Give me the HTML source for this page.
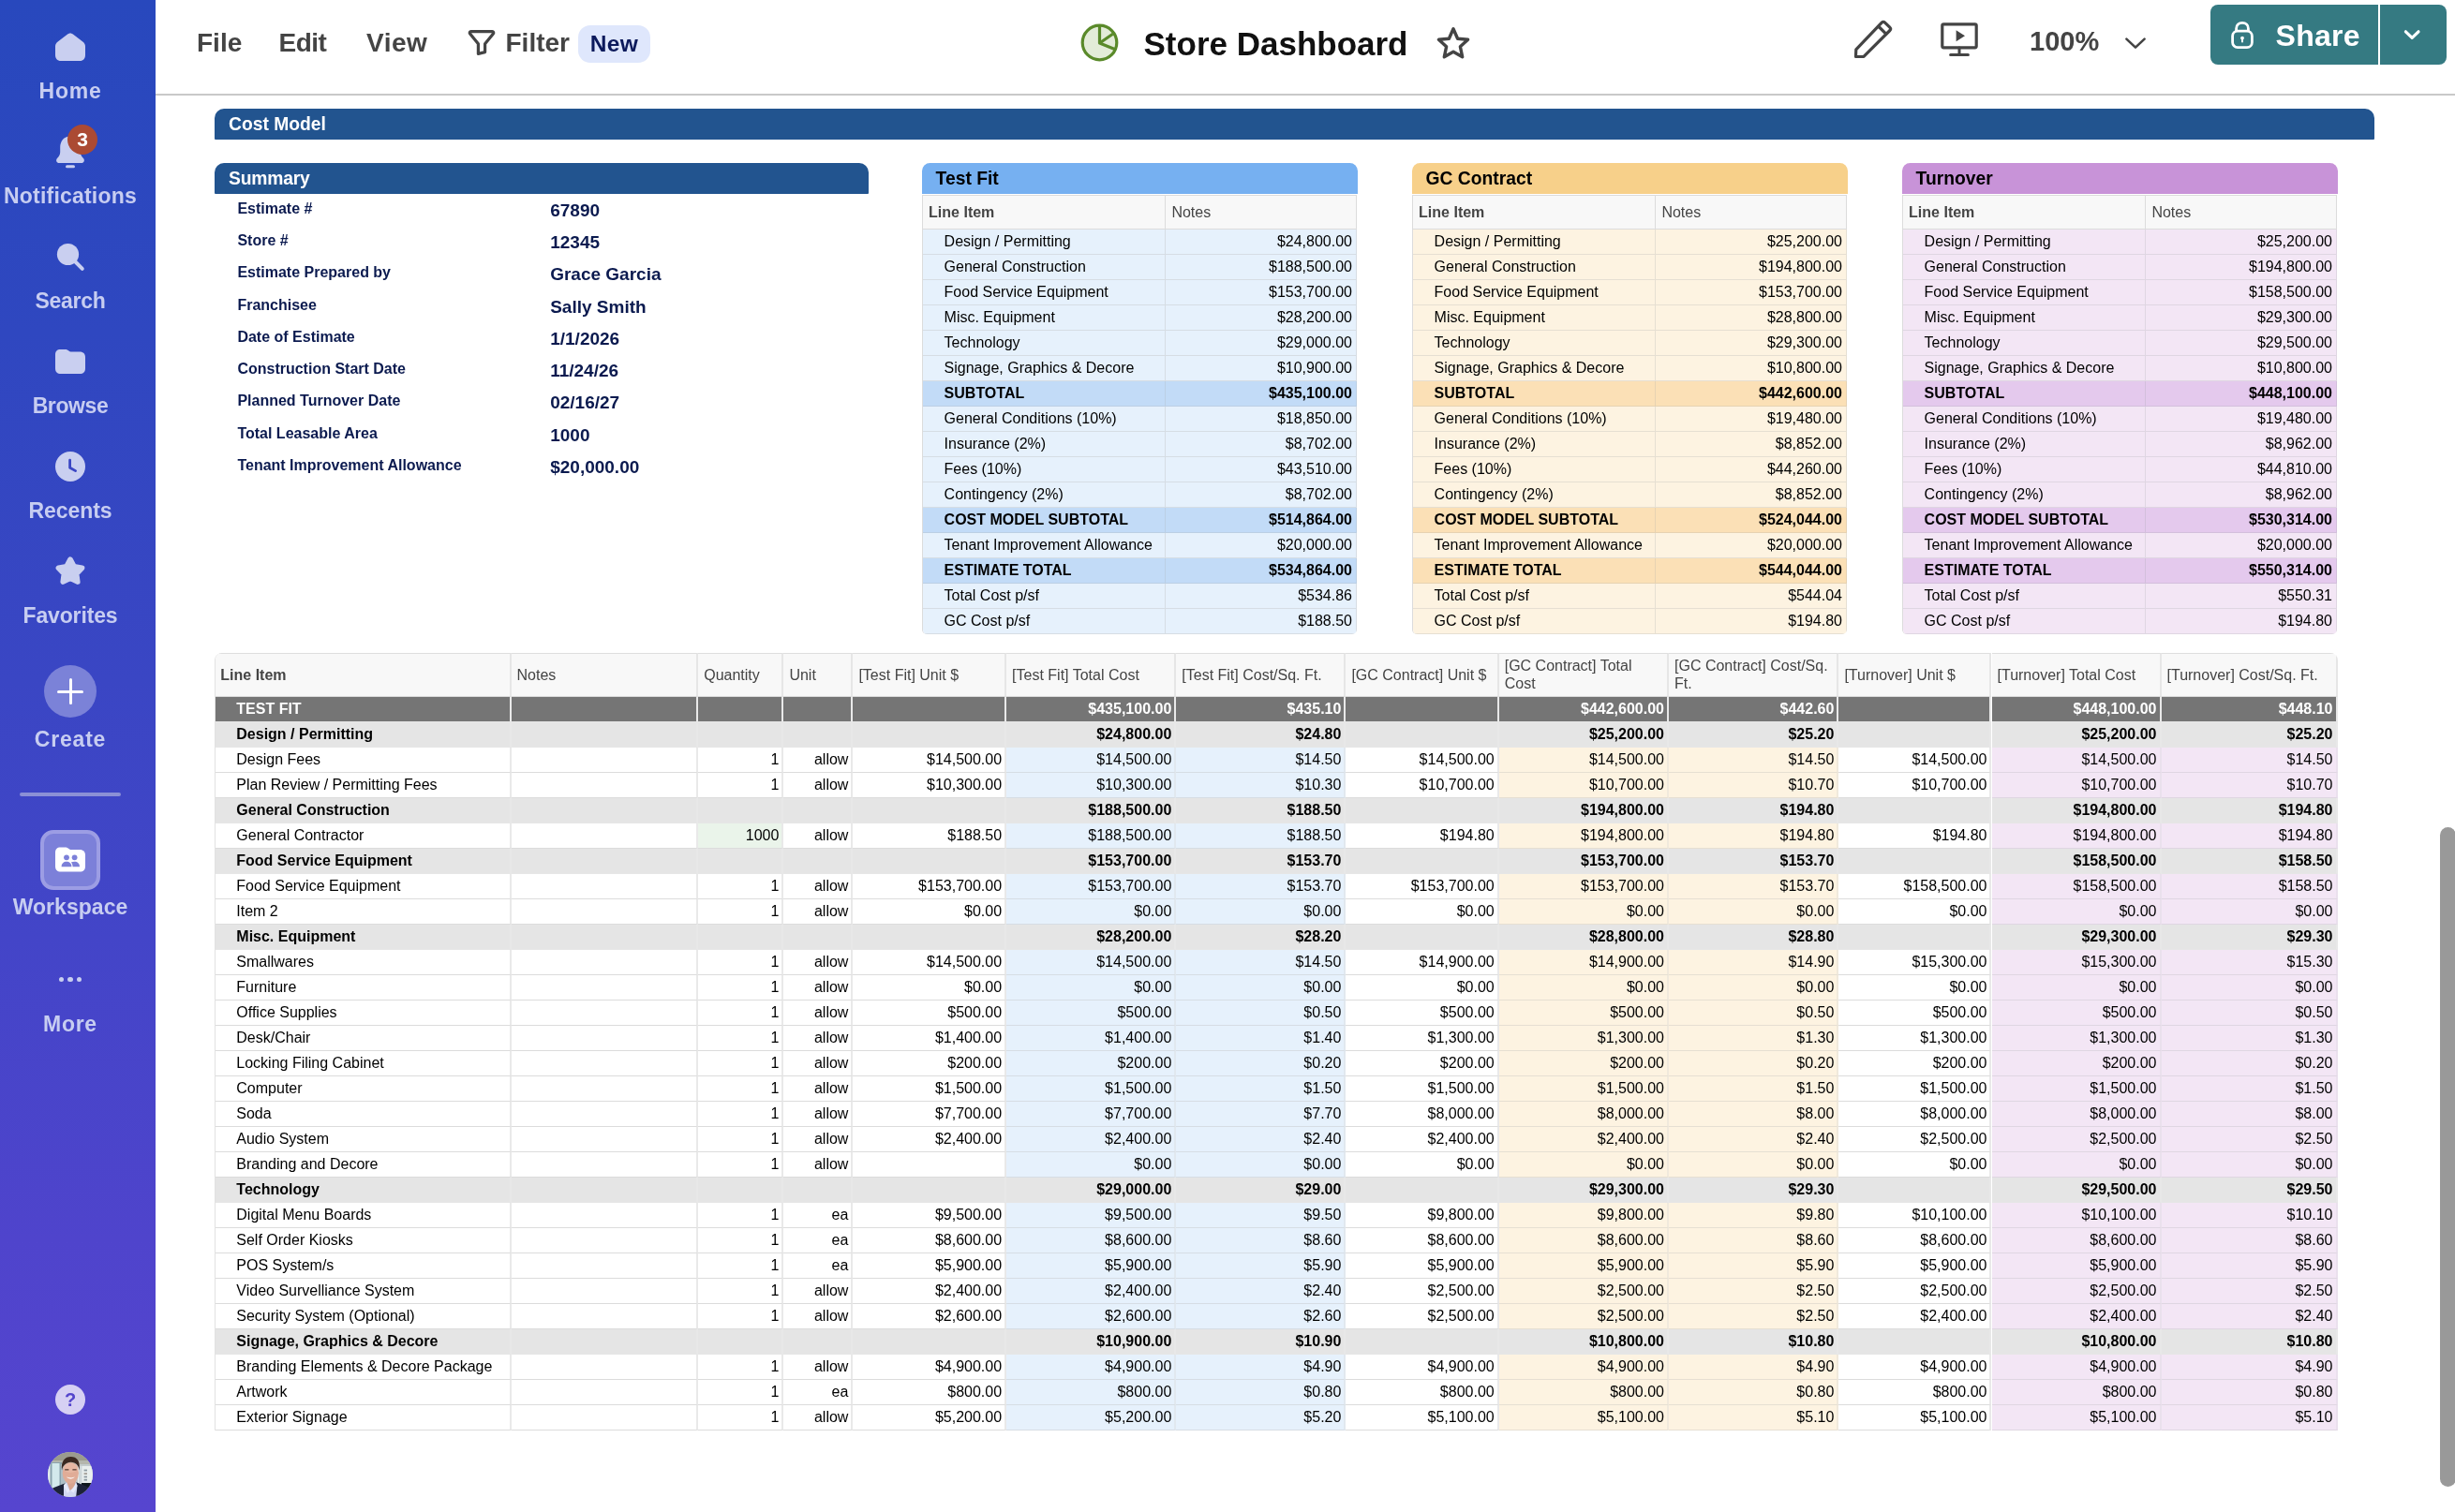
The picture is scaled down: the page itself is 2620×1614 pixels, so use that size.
<!DOCTYPE html>
<html><head><meta charset="utf-8"><title>Store Dashboard</title>
<style>
*{box-sizing:border-box;margin:0;padding:0}
html,body{width:2620px;height:1614px;overflow:hidden;background:#fff}
body{position:relative;font-family:"Liberation Sans",sans-serif;color:#000;-webkit-font-smoothing:antialiased}
#w{position:absolute;left:0;top:0;width:2620px;height:1614px;will-change:transform}
.abs{position:absolute}
/* ---------- sidebar ---------- */
#side{position:absolute;left:0;top:0;width:166px;height:1614px;
  background:linear-gradient(180deg,#2848bd 0%,#2f47c0 22%,#3a46c4 45%,#4345c8 62%,#4f44cc 82%,#5645cf 100%)}
.nl{position:absolute;left:0;width:150px;text-align:center;font-weight:bold;font-size:23px;line-height:28px;color:#c7cdf1;letter-spacing:.35px;white-space:nowrap}
.ni{position:absolute}
/* ---------- header ---------- */
#hdr{position:absolute;left:166px;top:0;width:2454px;height:102px;background:#fff;border-bottom:2px solid #c9c9c9}
.menu{position:absolute;font-weight:bold;font-size:28px;line-height:34px;color:#444;white-space:nowrap}
/* ---------- widgets ---------- */
.bar{position:absolute;height:33.4px;border-radius:10px 10px 1px 1px;font-weight:bold;font-size:19.3px;line-height:34px;padding-left:15px;white-space:nowrap}
.navy{background:#22548f;color:#fff}
.sl{position:absolute;left:253.4px;font-weight:bold;font-size:16px;line-height:20px;color:#0b1a4f;white-space:nowrap}
.sv{position:absolute;left:587.2px;font-weight:bold;font-size:19px;line-height:24px;color:#0b1a4f;white-space:nowrap}
/* ---------- grid tables ---------- */
.tb{position:absolute;font-size:16px;line-height:18px;white-space:nowrap}
.r{position:absolute;left:0;height:27px;width:100%}
.c{position:absolute;top:0;height:27px;border-right:1px solid #dbdbdb;border-bottom:1px solid #dcdcdc;padding:4px 4px 0 6px;overflow:hidden}
.c.n{text-align:right}
.c.i{padding-left:22.3px}
.h .c{background:#f8f8f8;color:#444;border-top:1px solid #dedede;border-bottom:1px solid #dadada;border-right:1px solid #dbdbdb;white-space:normal;display:flex;align-items:center;padding-top:0;line-height:19px}
.b{font-weight:bold}

.card{position:absolute;top:174px;width:464.8px}
.ch{position:absolute;left:0;top:0;width:464.8px;height:33px;border-radius:8.5px 8.5px 0 0;font-weight:bold;font-size:19.3px;line-height:33px;padding-left:14.5px;color:#000}
.tf .ch{background:#76b0f1}.gc .ch{background:#f7d08a}.to .ch{background:#c893d8}
.tf .c{background:#e6f1fc;border-color:#d6dde4}.tf .b .c{background:#c2dbf7;border-color:#bccfe4}
.gc .c{background:#fdf3e1;border-color:#e6dfd2}.gc .b .c{background:#fbe0b6;border-color:#e6d2b2}
.to .c{background:#f3e6f5;border-color:#dfd6e2}.to .b .c{background:#e4c9ed;border-color:#d3bfdc}
.card .h .c{background:#f8f8f8;border-color:#dcdcdc}
.card .c.i{padding-left:22.5px}.card .c.n{padding-right:4px}
.card .tb{left:0;top:34px;width:463.9px;height:469px;border-left:1px solid #dcdcdc;border-radius:0 0 5px 5px;overflow:hidden}
/* big table */
#big{left:229px;top:696.8px;width:2265.5px;height:830px;border-left:1px solid #e2e2e2;border-radius:8px 8px 0 0;overflow:hidden}
#big .c{border-right:2px solid #e9e9e9;padding-right:3px}
#big .h .c{border-right:2px solid #e6e6e6}
#big .h .c:first-child{padding-left:5.3px}
#big .d .c{background:#757575;color:#fff;border-bottom-color:#e5e5e5;border-right-color:#e9e9e9}
#big .s .c{background:#e5e5e5;border-bottom-color:#e6e6e6;border-right-color:#e8e8e8}
#big .c.bl{background:#e6f1fc;border-color:#d6dde4;border-right-color:#e1e8ef}
#big .c.og{background:#fdf3e1;border-color:#e6dfd2;border-right-color:#f0e9dc}
#big .c.pu{background:#f3e6f5;border-color:#dfd6e2;border-right-color:#eae0ed}
#big .c.gn{background:#eaf4ea}
</style></head>
<body>
<div id="w">
<div id="side">
<svg class="ni" style="left:59px;top:35px" width="32" height="30" viewBox="0 0 32 30"><path d="M16 0.4 C17.3 0.4 18.2 1 19.2 1.8 L29.3 9.6 C31 10.9 32 12.3 32 14.6 L32 23.5 C32 27.6 30 30 26 30 L6 30 C2 30 0 27.6 0 23.5 L0 14.6 C0 12.3 1 10.9 2.7 9.6 L12.8 1.8 C13.8 1 14.7 0.4 16 0.4 Z" fill="#c9cff0"/></svg>
<div class="nl" style="top:83px;letter-spacing:0.75px">Home</div>
<svg class="ni" style="left:58px;top:143px" width="36" height="38" viewBox="0 0 36 38"><path d="M17 2.5 C10 2.5 6.2 8 6.2 14.5 L6.2 19.5 C6.2 22.5 4.5 24.2 3 26 C1.2 28.2 2.3 31 5.2 31 L28.8 31 C31.7 31 32.8 28.2 31 26 C29.5 24.2 27.8 22.5 27.8 19.5 L27.8 14.5 C27.8 8 24 2.5 17 2.5 Z" fill="#c9cff0"/><rect x="12" y="33.3" width="10" height="3" rx="1.5" fill="#c9cff0"/></svg>
<div class="abs" style="left:72px;top:133px;width:32px;height:32px;border-radius:16px;background:#ab4a33;color:#fff;font-weight:bold;font-size:21px;line-height:32px;text-align:center">3</div>
<div class="nl" style="top:195px;letter-spacing:0.2px">Notifications</div>
<svg class="ni" style="left:58px;top:258px" width="34" height="34" viewBox="0 0 34 34"><circle cx="14.5" cy="13.5" r="11.6" fill="#c9cff0"/><path d="M22 21 L29.8 28.8" stroke="#c9cff0" stroke-width="4" stroke-linecap="round"/></svg>
<div class="nl" style="top:307px;letter-spacing:-0.3px">Search</div>
<svg class="ni" style="left:59px;top:373px" width="32" height="26" viewBox="0 0 32 26"><path d="M5.5 0 L11 0 C13.5 0 14.5 2.6 17.5 2.6 L26 2.6 C30 2.6 32 4.8 32 8.6 L32 20 C32 24 30 26 26 26 L6 26 C2 26 0 24 0 20 L0 5.8 C0 2 2 0 5.5 0 Z" fill="#c9cff0"/></svg>
<div class="nl" style="top:419px;letter-spacing:-0.4px">Browse</div>
<svg class="ni" style="left:59px;top:482px" width="32" height="32" viewBox="0 0 32 32"><circle cx="16" cy="16" r="16" fill="#c9cff0"/><path d="M15.6 9.2 L15.6 17.2 L21.6 20.6" fill="none" stroke="#3a46c4" stroke-width="2.8" stroke-linecap="round" stroke-linejoin="round"/></svg>
<div class="nl" style="top:531px;letter-spacing:-0.05px">Recents</div>
<svg class="ni" style="left:58px;top:592px" width="34" height="34" viewBox="0 0 34 34"><path d="M17.0 5.2 L21.1 12.8 L29.6 14.3 L23.6 20.5 L24.8 29.1 L17.0 25.3 L9.2 29.1 L10.4 20.5 L4.4 14.3 L12.9 12.8 Z" fill="#c9cff0" stroke="#c9cff0" stroke-width="5.6" stroke-linejoin="round"/></svg>
<div class="nl" style="top:643px;letter-spacing:-0.15px">Favorites</div>
<div class="abs" style="left:47px;top:710px;width:56px;height:56px;border-radius:28px;background:#7b82d8"></div>
<div class="abs" style="left:61px;top:736.5px;width:28px;height:3px;border-radius:1.5px;background:#fff"></div>
<div class="abs" style="left:73.5px;top:724px;width:3px;height:28px;border-radius:1.5px;background:#fff"></div>
<div class="nl" style="top:775px;letter-spacing:0.8px">Create</div>
<div class="abs" style="left:21px;top:845.5px;width:108px;height:4.5px;border-radius:2px;background:#8b90d6"></div>
<div class="abs" style="left:43px;top:886px;width:64px;height:64px;border-radius:14px;background:#7c80d9;border:4px solid #9c9de4"></div>
<svg class="ni" style="left:59px;top:904px" width="32" height="27" viewBox="0 0 32 27"><path d="M5.5 0.5 L11 0.5 C13.5 0.5 14.5 3.1 17.5 3.1 L26 3.1 C30 3.1 32 5.3 32 9.1 L32 20.5 C32 24.5 30 26.5 26 26.5 L6 26.5 C2 26.5 0 24.5 0 20.5 L0 6.3 C0 2.5 2 0.5 5.5 0.5 Z" fill="#fff"/><circle cx="12" cy="11.3" r="2.9" fill="#7c80d9"/><circle cx="20.6" cy="11.3" r="2.9" fill="#7c80d9"/><path d="M6.6 21.2 C6.6 17.8 9 15.8 12 15.8 C15 15.8 17.4 17.8 17.4 21.2 Z" fill="#7c80d9"/><path d="M18.6 21.2 C18.6 19.2 17.8 17.6 16.8 16.6 C17.9 16 19.2 15.8 20.6 15.8 C23.6 15.8 26 17.8 26 21.2 Z" fill="#7c80d9"/></svg>
<div class="nl" style="top:954px;letter-spacing:0.05px">Workspace</div>
<div class="abs" style="left:62.9px;top:1043px;width:5.2px;height:5.2px;border-radius:3px;background:#c9cff0"></div>
<div class="abs" style="left:72.4px;top:1043px;width:5.2px;height:5.2px;border-radius:3px;background:#c9cff0"></div>
<div class="abs" style="left:82.0px;top:1043px;width:5.2px;height:5.2px;border-radius:3px;background:#c9cff0"></div>
<div class="nl" style="top:1079px;letter-spacing:0.7px">More</div>
<div class="abs" style="left:59px;top:1478px;width:32px;height:32px;border-radius:16px;background:#d6d0f3;color:#5445cc;font-weight:bold;font-size:20px;line-height:32px;text-align:center">?</div>
<svg class="ni" style="left:51px;top:1550px" width="48" height="48" viewBox="0 0 48 48"><defs><clipPath id="av"><circle cx="24" cy="24" r="24"/></clipPath><filter id="bl" x="-10%" y="-10%" width="120%" height="120%"><feGaussianBlur stdDeviation="0.55"/></filter></defs><g clip-path="url(#av)"><rect width="48" height="48" fill="#c3cbcc"/><g filter="url(#bl)"><rect x="-2" y="-2" width="52" height="13" fill="#9b9b8e"/><rect x="-2" y="9" width="52" height="4" fill="#b4b6ad"/><rect x="0" y="11" width="15" height="30" fill="#8aa3ae"/><rect x="4.5" y="12" width="8" height="28" fill="#d3e9ec"/><rect x="0" y="12" width="2.5" height="26" fill="#e4eef0"/><rect x="14" y="13" width="6" height="24" fill="#aebfc6"/><rect x="32" y="15" width="18" height="22" fill="#e9efee"/><rect x="33" y="15" width="3.5" height="20" fill="#cfd8da"/><rect x="38.6" y="18.6" width="3.4" height="1.8" fill="#8e9ba2"/><rect x="38.6" y="22.2" width="3.4" height="1.8" fill="#a39f98"/><rect x="38.6" y="25.6" width="3.4" height="1.8" fill="#8e9ba2"/><rect x="38.6" y="28.8" width="3.4" height="1.8" fill="#8e9ba2"/><rect x="36" y="33" width="14" height="9" fill="#10141f"/><path d="M-2 50 L-2 42 C4 39 11 36 18 33.5 L31 32.5 C37 34.5 43 37.5 50 41 L50 50 Z" fill="#1d2338"/><path d="M17 35 L20.5 32 L30 32 L31.5 36 L30 49 L17 49 Z" fill="#d2d9f1"/><path d="M20 31 L30 31 L28 38 L23.5 41 Z" fill="#d9a48f"/><path d="M19 33 L23.5 41.5 L21 44 L17 36 Z" fill="#e6eafa"/><path d="M30.5 33 L24.5 41.5 L27.5 43.5 L31.5 36 Z" fill="#e6eafa"/><ellipse cx="24.3" cy="22.5" rx="8.6" ry="11.2" fill="#e0ac97"/><ellipse cx="24.3" cy="17" rx="7.8" ry="5" fill="#e6b7a3"/><path d="M15 19.5 C13.8 9.5 18.5 5 24.5 5 C31 5 35 9.5 33.6 19.5 C32.6 14 30.5 11.2 24.5 10.8 C19.5 11.2 16.2 14 15 19.5 Z" fill="#3a2921"/><rect x="18.2" y="18.2" width="4.2" height="1.3" fill="#5b4036"/><rect x="26.4" y="18.2" width="4.2" height="1.3" fill="#5b4036"/><path d="M20 26.6 C22 29.4 26.8 29.4 28.8 26.6 C26.5 27.6 22.3 27.6 20 26.6 Z" fill="#f7efec"/></g></g></svg>
</div>
<div id="hdr">
<div class="menu" style="left:44px;top:29px">File</div>
<div class="menu" style="left:131.5px;top:29px;letter-spacing:-.5px">Edit</div>
<div class="menu" style="left:225px;top:29px;letter-spacing:.5px">View</div>
<svg class="abs" style="left:332px;top:30px" width="32" height="32" viewBox="0 0 32 32"><path d="M4.6 3.7 L27.4 3.7 C28.6 3.7 29.2 5 28.4 6 L19.6 16.8 L19.6 25.6 L12.4 27.4 L12.4 16.8 L3.6 6 C2.8 5 3.4 3.7 4.6 3.7 Z" fill="none" stroke="#444" stroke-width="3.2" stroke-linejoin="round"/></svg>
<div class="menu" style="left:373.5px;top:29px">Filter</div>
<div class="abs" style="left:451px;top:27px;width:77px;height:40px;border-radius:13px;background:#dfe7fc;color:#0c1a5c;font-weight:bold;font-size:24.5px;line-height:40px;text-align:center;letter-spacing:.3px">New</div>
<svg class="abs" style="left:986px;top:23.5px" width="43" height="43" viewBox="0 0 43 43"><circle cx="21.5" cy="21.5" r="18.3" fill="#e3ecd8" stroke="#5a8a2a" stroke-width="3.2"/><path d="M21.5 3.5 L21.5 22 L35.6 12.2 M21.5 22 L37.6 28.6" fill="none" stroke="#5a8a2a" stroke-width="3.2" stroke-linejoin="round"/></svg>
<div class="abs" style="left:1054.5px;top:26.4px;font-weight:bold;font-size:35px;line-height:42px;color:#111;white-space:nowrap;letter-spacing:0">Store Dashboard</div>
<svg class="abs" style="left:1365px;top:26px" width="40" height="40" viewBox="0 0 40 40"><path d="M20 4.8 L24.6 15.2 L35.6 16.3 L27.4 23.8 L29.7 34.8 L20 29.2 L10.3 34.8 L12.6 23.8 L4.4 16.3 L15.4 15.2 Z" fill="none" stroke="#444" stroke-width="3.4" stroke-linejoin="round"/></svg>
<svg class="abs" style="left:1810px;top:19px" width="46" height="46" viewBox="0 0 46 46"><path d="M4.5 41.5 L4.8 33.8 L32.2 5.2 C33.2 4.2 34.6 4.2 35.6 5.1 L40.8 10.1 C41.8 11.1 41.8 12.5 40.9 13.5 L13 41.3 Z M28.6 9 L37 17.3" fill="none" stroke="#444" stroke-width="3.2" stroke-linejoin="round" stroke-linecap="round"/></svg>
<svg class="abs" style="left:1903px;top:22px" width="44" height="40" viewBox="0 0 44 40"><rect x="3.8" y="3.8" width="36.4" height="25" rx="1.5" fill="none" stroke="#444" stroke-width="3.2"/><path d="M22 29 L22 36.4 M12.6 36.6 L31.4 36.6" stroke="#444" stroke-width="3" stroke-linecap="round"/><path d="M18.6 10.2 L28 16.2 L18.6 22.2 Z" fill="#444"/></svg>
<div class="menu" style="left:2000px;top:26.5px;font-size:29px">100%</div>
<svg class="abs" style="left:2100px;top:38px" width="26" height="16" viewBox="0 0 26 16"><path d="M3.4 3.6 L13 12.6 L22.6 3.6" fill="none" stroke="#444" stroke-width="2.6" stroke-linecap="round" stroke-linejoin="round"/></svg>
<div class="abs" style="left:2193px;top:5px;width:179px;height:64px;border-radius:8px 0 0 8px;background:#357a82"></div>
<div class="abs" style="left:2374px;top:5px;width:70.5px;height:64px;border-radius:0 8px 8px 0;background:#357a82"></div>
<svg class="abs" style="left:2212px;top:20px" width="30" height="34" viewBox="0 0 30 34"><path d="M8.6 13.5 L8.6 10.4 C8.6 6.6 11.2 4.4 15 4.4 C18.8 4.4 21.4 6.6 21.4 10.4 L21.4 13.5" fill="none" stroke="#fff" stroke-width="2.8"/><rect x="4.6" y="13.2" width="20.8" height="17.4" rx="5.4" fill="none" stroke="#fff" stroke-width="2.8"/><circle cx="15" cy="20.6" r="1.9" fill="#fff"/><rect x="14" y="20.6" width="2" height="5" rx="1" fill="#fff"/></svg>
<div class="abs" style="left:2262.5px;top:8.5px;font-weight:bold;font-size:32px;line-height:58px;color:#fff;white-space:nowrap;letter-spacing:.3px">Share</div>
<svg class="abs" style="left:2396px;top:28px" width="24" height="18" viewBox="0 0 24 18"><path d="M5.4 5.8 L12.2 12.4 L19 5.8" fill="none" stroke="#fff" stroke-width="3.2" stroke-linecap="round" stroke-linejoin="round"/></svg>
</div>
<div class="bar navy" style="left:229px;top:116px;width:2305px">Cost Model</div>
<div class="bar navy" style="left:229px;top:174px;width:698px;letter-spacing:-.2px">Summary</div>
<div class="sl" style="top:212.90px">Estimate #</div>
<div class="sv" style="top:212.83px">67890</div>
<div class="sl" style="top:247.16px">Store #</div>
<div class="sv" style="top:247.09px">12345</div>
<div class="sl" style="top:281.42px">Estimate Prepared by</div>
<div class="sv" style="top:281.35px">Grace Garcia</div>
<div class="sl" style="top:315.68px">Franchisee</div>
<div class="sv" style="top:315.61px">Sally Smith</div>
<div class="sl" style="top:349.94px">Date of Estimate</div>
<div class="sv" style="top:349.87px">1/1/2026</div>
<div class="sl" style="top:384.20px">Construction Start Date</div>
<div class="sv" style="top:384.13px">11/24/26</div>
<div class="sl" style="top:418.46px">Planned Turnover Date</div>
<div class="sv" style="top:418.39px">02/16/27</div>
<div class="sl" style="top:452.72px">Total Leasable Area</div>
<div class="sv" style="top:452.65px">1000</div>
<div class="sl" style="top:486.98px">Tenant Improvement Allowance</div>
<div class="sv" style="top:486.91px">$20,000.00</div>
<div class="abs" style="left:2604px;top:883px;width:17px;height:704px;border-radius:8.5px;background:#999"></div>
<div class="card tf" style="left:984.1px">
<div class="ch">Test Fit</div>
<div class="tb">
<div class="r h" style="top:0;height:37px"><div class="c b" style="left:0;width:259.3px;height:37px">Line Item</div><div class="c" style="left:259.3px;width:203.6px;height:37px">Notes</div></div>
<div class="r" style="top:37px"><div class="c i" style="left:0;width:259.3px">Design / Permitting</div><div class="c n" style="left:259.3px;width:203.6px">$24,800.00</div></div>
<div class="r" style="top:64px"><div class="c i" style="left:0;width:259.3px">General Construction</div><div class="c n" style="left:259.3px;width:203.6px">$188,500.00</div></div>
<div class="r" style="top:91px"><div class="c i" style="left:0;width:259.3px">Food Service Equipment</div><div class="c n" style="left:259.3px;width:203.6px">$153,700.00</div></div>
<div class="r" style="top:118px"><div class="c i" style="left:0;width:259.3px">Misc. Equipment</div><div class="c n" style="left:259.3px;width:203.6px">$28,200.00</div></div>
<div class="r" style="top:145px"><div class="c i" style="left:0;width:259.3px">Technology</div><div class="c n" style="left:259.3px;width:203.6px">$29,000.00</div></div>
<div class="r" style="top:172px"><div class="c i" style="left:0;width:259.3px">Signage, Graphics &amp; Decore</div><div class="c n" style="left:259.3px;width:203.6px">$10,900.00</div></div>
<div class="r b" style="top:199px"><div class="c i" style="left:0;width:259.3px">SUBTOTAL</div><div class="c n" style="left:259.3px;width:203.6px">$435,100.00</div></div>
<div class="r" style="top:226px"><div class="c i" style="left:0;width:259.3px">General Conditions (10%)</div><div class="c n" style="left:259.3px;width:203.6px">$18,850.00</div></div>
<div class="r" style="top:253px"><div class="c i" style="left:0;width:259.3px">Insurance (2%)</div><div class="c n" style="left:259.3px;width:203.6px">$8,702.00</div></div>
<div class="r" style="top:280px"><div class="c i" style="left:0;width:259.3px">Fees (10%)</div><div class="c n" style="left:259.3px;width:203.6px">$43,510.00</div></div>
<div class="r" style="top:307px"><div class="c i" style="left:0;width:259.3px">Contingency (2%)</div><div class="c n" style="left:259.3px;width:203.6px">$8,702.00</div></div>
<div class="r b" style="top:334px"><div class="c i" style="left:0;width:259.3px">COST MODEL SUBTOTAL</div><div class="c n" style="left:259.3px;width:203.6px">$514,864.00</div></div>
<div class="r" style="top:361px"><div class="c i" style="left:0;width:259.3px">Tenant Improvement Allowance</div><div class="c n" style="left:259.3px;width:203.6px">$20,000.00</div></div>
<div class="r b" style="top:388px"><div class="c i" style="left:0;width:259.3px">ESTIMATE TOTAL</div><div class="c n" style="left:259.3px;width:203.6px">$534,864.00</div></div>
<div class="r" style="top:415px"><div class="c i" style="left:0;width:259.3px">Total Cost p/sf</div><div class="c n" style="left:259.3px;width:203.6px">$534.86</div></div>
<div class="r" style="top:442px"><div class="c i" style="left:0;width:259.3px">GC Cost p/sf</div><div class="c n" style="left:259.3px;width:203.6px">$188.50</div></div>
</div></div>
<div class="card gc" style="left:1507.1px">
<div class="ch">GC Contract</div>
<div class="tb">
<div class="r h" style="top:0;height:37px"><div class="c b" style="left:0;width:259.3px;height:37px">Line Item</div><div class="c" style="left:259.3px;width:203.6px;height:37px">Notes</div></div>
<div class="r" style="top:37px"><div class="c i" style="left:0;width:259.3px">Design / Permitting</div><div class="c n" style="left:259.3px;width:203.6px">$25,200.00</div></div>
<div class="r" style="top:64px"><div class="c i" style="left:0;width:259.3px">General Construction</div><div class="c n" style="left:259.3px;width:203.6px">$194,800.00</div></div>
<div class="r" style="top:91px"><div class="c i" style="left:0;width:259.3px">Food Service Equipment</div><div class="c n" style="left:259.3px;width:203.6px">$153,700.00</div></div>
<div class="r" style="top:118px"><div class="c i" style="left:0;width:259.3px">Misc. Equipment</div><div class="c n" style="left:259.3px;width:203.6px">$28,800.00</div></div>
<div class="r" style="top:145px"><div class="c i" style="left:0;width:259.3px">Technology</div><div class="c n" style="left:259.3px;width:203.6px">$29,300.00</div></div>
<div class="r" style="top:172px"><div class="c i" style="left:0;width:259.3px">Signage, Graphics &amp; Decore</div><div class="c n" style="left:259.3px;width:203.6px">$10,800.00</div></div>
<div class="r b" style="top:199px"><div class="c i" style="left:0;width:259.3px">SUBTOTAL</div><div class="c n" style="left:259.3px;width:203.6px">$442,600.00</div></div>
<div class="r" style="top:226px"><div class="c i" style="left:0;width:259.3px">General Conditions (10%)</div><div class="c n" style="left:259.3px;width:203.6px">$19,480.00</div></div>
<div class="r" style="top:253px"><div class="c i" style="left:0;width:259.3px">Insurance (2%)</div><div class="c n" style="left:259.3px;width:203.6px">$8,852.00</div></div>
<div class="r" style="top:280px"><div class="c i" style="left:0;width:259.3px">Fees (10%)</div><div class="c n" style="left:259.3px;width:203.6px">$44,260.00</div></div>
<div class="r" style="top:307px"><div class="c i" style="left:0;width:259.3px">Contingency (2%)</div><div class="c n" style="left:259.3px;width:203.6px">$8,852.00</div></div>
<div class="r b" style="top:334px"><div class="c i" style="left:0;width:259.3px">COST MODEL SUBTOTAL</div><div class="c n" style="left:259.3px;width:203.6px">$524,044.00</div></div>
<div class="r" style="top:361px"><div class="c i" style="left:0;width:259.3px">Tenant Improvement Allowance</div><div class="c n" style="left:259.3px;width:203.6px">$20,000.00</div></div>
<div class="r b" style="top:388px"><div class="c i" style="left:0;width:259.3px">ESTIMATE TOTAL</div><div class="c n" style="left:259.3px;width:203.6px">$544,044.00</div></div>
<div class="r" style="top:415px"><div class="c i" style="left:0;width:259.3px">Total Cost p/sf</div><div class="c n" style="left:259.3px;width:203.6px">$544.04</div></div>
<div class="r" style="top:442px"><div class="c i" style="left:0;width:259.3px">GC Cost p/sf</div><div class="c n" style="left:259.3px;width:203.6px">$194.80</div></div>
</div></div>
<div class="card to" style="left:2030.1px">
<div class="ch">Turnover</div>
<div class="tb">
<div class="r h" style="top:0;height:37px"><div class="c b" style="left:0;width:259.3px;height:37px">Line Item</div><div class="c" style="left:259.3px;width:203.6px;height:37px">Notes</div></div>
<div class="r" style="top:37px"><div class="c i" style="left:0;width:259.3px">Design / Permitting</div><div class="c n" style="left:259.3px;width:203.6px">$25,200.00</div></div>
<div class="r" style="top:64px"><div class="c i" style="left:0;width:259.3px">General Construction</div><div class="c n" style="left:259.3px;width:203.6px">$194,800.00</div></div>
<div class="r" style="top:91px"><div class="c i" style="left:0;width:259.3px">Food Service Equipment</div><div class="c n" style="left:259.3px;width:203.6px">$158,500.00</div></div>
<div class="r" style="top:118px"><div class="c i" style="left:0;width:259.3px">Misc. Equipment</div><div class="c n" style="left:259.3px;width:203.6px">$29,300.00</div></div>
<div class="r" style="top:145px"><div class="c i" style="left:0;width:259.3px">Technology</div><div class="c n" style="left:259.3px;width:203.6px">$29,500.00</div></div>
<div class="r" style="top:172px"><div class="c i" style="left:0;width:259.3px">Signage, Graphics &amp; Decore</div><div class="c n" style="left:259.3px;width:203.6px">$10,800.00</div></div>
<div class="r b" style="top:199px"><div class="c i" style="left:0;width:259.3px">SUBTOTAL</div><div class="c n" style="left:259.3px;width:203.6px">$448,100.00</div></div>
<div class="r" style="top:226px"><div class="c i" style="left:0;width:259.3px">General Conditions (10%)</div><div class="c n" style="left:259.3px;width:203.6px">$19,480.00</div></div>
<div class="r" style="top:253px"><div class="c i" style="left:0;width:259.3px">Insurance (2%)</div><div class="c n" style="left:259.3px;width:203.6px">$8,962.00</div></div>
<div class="r" style="top:280px"><div class="c i" style="left:0;width:259.3px">Fees (10%)</div><div class="c n" style="left:259.3px;width:203.6px">$44,810.00</div></div>
<div class="r" style="top:307px"><div class="c i" style="left:0;width:259.3px">Contingency (2%)</div><div class="c n" style="left:259.3px;width:203.6px">$8,962.00</div></div>
<div class="r b" style="top:334px"><div class="c i" style="left:0;width:259.3px">COST MODEL SUBTOTAL</div><div class="c n" style="left:259.3px;width:203.6px">$530,314.00</div></div>
<div class="r" style="top:361px"><div class="c i" style="left:0;width:259.3px">Tenant Improvement Allowance</div><div class="c n" style="left:259.3px;width:203.6px">$20,000.00</div></div>
<div class="r b" style="top:388px"><div class="c i" style="left:0;width:259.3px">ESTIMATE TOTAL</div><div class="c n" style="left:259.3px;width:203.6px">$550,314.00</div></div>
<div class="r" style="top:415px"><div class="c i" style="left:0;width:259.3px">Total Cost p/sf</div><div class="c n" style="left:259.3px;width:203.6px">$550.31</div></div>
<div class="r" style="top:442px"><div class="c i" style="left:0;width:259.3px">GC Cost p/sf</div><div class="c n" style="left:259.3px;width:203.6px">$194.80</div></div>
</div></div>
<div class="tb" id="big">
<div class="r h" style="top:0;height:47px">
<div class="c b" style="left:0px;width:315.5px;height:47px">Line Item</div>
<div class="c" style="left:315.5px;width:199.7px;height:47px">Notes</div>
<div class="c" style="left:515.2px;width:91.2px;height:47px">Quantity</div>
<div class="c" style="left:606.4px;width:74px;height:47px">Unit</div>
<div class="c" style="left:680.4px;width:163.7px;height:47px">[Test Fit] Unit $</div>
<div class="c" style="left:844.1px;width:181.2px;height:47px">[Test Fit] Total Cost</div>
<div class="c" style="left:1025.3px;width:181.1px;height:47px">[Test Fit] Cost/Sq. Ft.</div>
<div class="c" style="left:1206.4px;width:163.3px;height:47px">[GC Contract] Unit $</div>
<div class="c" style="left:1369.7px;width:181.3px;height:47px">[GC Contract] Total Cost</div>
<div class="c" style="left:1551px;width:181.4px;height:47px">[GC Contract] Cost/Sq. Ft.</div>
<div class="c" style="left:1732.4px;width:163.1px;height:47px">[Turnover] Unit $</div>
<div class="c" style="left:1895.5px;width:181px;height:47px">[Turnover] Total Cost</div>
<div class="c" style="left:2076.5px;width:188px;height:47px">[Turnover] Cost/Sq. Ft.</div>
</div>
<div class="r d b" style="top:47px">
<div class="c i" style="left:0px;width:315.5px">TEST FIT</div>
<div class="c" style="left:315.5px;width:199.7px"></div>
<div class="c n" style="left:515.2px;width:91.2px"></div>
<div class="c n" style="left:606.4px;width:74px"></div>
<div class="c n" style="left:680.4px;width:163.7px"></div>
<div class="c n" style="left:844.1px;width:181.2px">$435,100.00</div>
<div class="c n" style="left:1025.3px;width:181.1px">$435.10</div>
<div class="c n" style="left:1206.4px;width:163.3px"></div>
<div class="c n" style="left:1369.7px;width:181.3px">$442,600.00</div>
<div class="c n" style="left:1551px;width:181.4px">$442.60</div>
<div class="c n" style="left:1732.4px;width:163.1px"></div>
<div class="c n" style="left:1895.5px;width:181px">$448,100.00</div>
<div class="c n" style="left:2076.5px;width:188px">$448.10</div>
</div>
<div class="r s b" style="top:74px">
<div class="c i" style="left:0px;width:315.5px">Design / Permitting</div>
<div class="c" style="left:315.5px;width:199.7px"></div>
<div class="c n" style="left:515.2px;width:91.2px"></div>
<div class="c n" style="left:606.4px;width:74px"></div>
<div class="c n" style="left:680.4px;width:163.7px"></div>
<div class="c n" style="left:844.1px;width:181.2px">$24,800.00</div>
<div class="c n" style="left:1025.3px;width:181.1px">$24.80</div>
<div class="c n" style="left:1206.4px;width:163.3px"></div>
<div class="c n" style="left:1369.7px;width:181.3px">$25,200.00</div>
<div class="c n" style="left:1551px;width:181.4px">$25.20</div>
<div class="c n" style="left:1732.4px;width:163.1px"></div>
<div class="c n" style="left:1895.5px;width:181px">$25,200.00</div>
<div class="c n" style="left:2076.5px;width:188px">$25.20</div>
</div>
<div class="r" style="top:101px">
<div class="c i" style="left:0px;width:315.5px">Design Fees</div>
<div class="c" style="left:315.5px;width:199.7px"></div>
<div class="c n" style="left:515.2px;width:91.2px">1</div>
<div class="c n" style="left:606.4px;width:74px">allow</div>
<div class="c n" style="left:680.4px;width:163.7px">$14,500.00</div>
<div class="c n bl" style="left:844.1px;width:181.2px">$14,500.00</div>
<div class="c n bl" style="left:1025.3px;width:181.1px">$14.50</div>
<div class="c n" style="left:1206.4px;width:163.3px">$14,500.00</div>
<div class="c n og" style="left:1369.7px;width:181.3px">$14,500.00</div>
<div class="c n og" style="left:1551px;width:181.4px">$14.50</div>
<div class="c n" style="left:1732.4px;width:163.1px">$14,500.00</div>
<div class="c n pu" style="left:1895.5px;width:181px">$14,500.00</div>
<div class="c n pu" style="left:2076.5px;width:188px">$14.50</div>
</div>
<div class="r" style="top:128px">
<div class="c i" style="left:0px;width:315.5px">Plan Review / Permitting Fees</div>
<div class="c" style="left:315.5px;width:199.7px"></div>
<div class="c n" style="left:515.2px;width:91.2px">1</div>
<div class="c n" style="left:606.4px;width:74px">allow</div>
<div class="c n" style="left:680.4px;width:163.7px">$10,300.00</div>
<div class="c n bl" style="left:844.1px;width:181.2px">$10,300.00</div>
<div class="c n bl" style="left:1025.3px;width:181.1px">$10.30</div>
<div class="c n" style="left:1206.4px;width:163.3px">$10,700.00</div>
<div class="c n og" style="left:1369.7px;width:181.3px">$10,700.00</div>
<div class="c n og" style="left:1551px;width:181.4px">$10.70</div>
<div class="c n" style="left:1732.4px;width:163.1px">$10,700.00</div>
<div class="c n pu" style="left:1895.5px;width:181px">$10,700.00</div>
<div class="c n pu" style="left:2076.5px;width:188px">$10.70</div>
</div>
<div class="r s b" style="top:155px">
<div class="c i" style="left:0px;width:315.5px">General Construction</div>
<div class="c" style="left:315.5px;width:199.7px"></div>
<div class="c n" style="left:515.2px;width:91.2px"></div>
<div class="c n" style="left:606.4px;width:74px"></div>
<div class="c n" style="left:680.4px;width:163.7px"></div>
<div class="c n" style="left:844.1px;width:181.2px">$188,500.00</div>
<div class="c n" style="left:1025.3px;width:181.1px">$188.50</div>
<div class="c n" style="left:1206.4px;width:163.3px"></div>
<div class="c n" style="left:1369.7px;width:181.3px">$194,800.00</div>
<div class="c n" style="left:1551px;width:181.4px">$194.80</div>
<div class="c n" style="left:1732.4px;width:163.1px"></div>
<div class="c n" style="left:1895.5px;width:181px">$194,800.00</div>
<div class="c n" style="left:2076.5px;width:188px">$194.80</div>
</div>
<div class="r" style="top:182px">
<div class="c i" style="left:0px;width:315.5px">General Contractor</div>
<div class="c" style="left:315.5px;width:199.7px"></div>
<div class="c n gn" style="left:515.2px;width:91.2px">1000</div>
<div class="c n" style="left:606.4px;width:74px">allow</div>
<div class="c n" style="left:680.4px;width:163.7px">$188.50</div>
<div class="c n bl" style="left:844.1px;width:181.2px">$188,500.00</div>
<div class="c n bl" style="left:1025.3px;width:181.1px">$188.50</div>
<div class="c n" style="left:1206.4px;width:163.3px">$194.80</div>
<div class="c n og" style="left:1369.7px;width:181.3px">$194,800.00</div>
<div class="c n og" style="left:1551px;width:181.4px">$194.80</div>
<div class="c n" style="left:1732.4px;width:163.1px">$194.80</div>
<div class="c n pu" style="left:1895.5px;width:181px">$194,800.00</div>
<div class="c n pu" style="left:2076.5px;width:188px">$194.80</div>
</div>
<div class="r s b" style="top:209px">
<div class="c i" style="left:0px;width:315.5px">Food Service Equipment</div>
<div class="c" style="left:315.5px;width:199.7px"></div>
<div class="c n" style="left:515.2px;width:91.2px"></div>
<div class="c n" style="left:606.4px;width:74px"></div>
<div class="c n" style="left:680.4px;width:163.7px"></div>
<div class="c n" style="left:844.1px;width:181.2px">$153,700.00</div>
<div class="c n" style="left:1025.3px;width:181.1px">$153.70</div>
<div class="c n" style="left:1206.4px;width:163.3px"></div>
<div class="c n" style="left:1369.7px;width:181.3px">$153,700.00</div>
<div class="c n" style="left:1551px;width:181.4px">$153.70</div>
<div class="c n" style="left:1732.4px;width:163.1px"></div>
<div class="c n" style="left:1895.5px;width:181px">$158,500.00</div>
<div class="c n" style="left:2076.5px;width:188px">$158.50</div>
</div>
<div class="r" style="top:236px">
<div class="c i" style="left:0px;width:315.5px">Food Service Equipment</div>
<div class="c" style="left:315.5px;width:199.7px"></div>
<div class="c n" style="left:515.2px;width:91.2px">1</div>
<div class="c n" style="left:606.4px;width:74px">allow</div>
<div class="c n" style="left:680.4px;width:163.7px">$153,700.00</div>
<div class="c n bl" style="left:844.1px;width:181.2px">$153,700.00</div>
<div class="c n bl" style="left:1025.3px;width:181.1px">$153.70</div>
<div class="c n" style="left:1206.4px;width:163.3px">$153,700.00</div>
<div class="c n og" style="left:1369.7px;width:181.3px">$153,700.00</div>
<div class="c n og" style="left:1551px;width:181.4px">$153.70</div>
<div class="c n" style="left:1732.4px;width:163.1px">$158,500.00</div>
<div class="c n pu" style="left:1895.5px;width:181px">$158,500.00</div>
<div class="c n pu" style="left:2076.5px;width:188px">$158.50</div>
</div>
<div class="r" style="top:263px">
<div class="c i" style="left:0px;width:315.5px">Item 2</div>
<div class="c" style="left:315.5px;width:199.7px"></div>
<div class="c n" style="left:515.2px;width:91.2px">1</div>
<div class="c n" style="left:606.4px;width:74px">allow</div>
<div class="c n" style="left:680.4px;width:163.7px">$0.00</div>
<div class="c n bl" style="left:844.1px;width:181.2px">$0.00</div>
<div class="c n bl" style="left:1025.3px;width:181.1px">$0.00</div>
<div class="c n" style="left:1206.4px;width:163.3px">$0.00</div>
<div class="c n og" style="left:1369.7px;width:181.3px">$0.00</div>
<div class="c n og" style="left:1551px;width:181.4px">$0.00</div>
<div class="c n" style="left:1732.4px;width:163.1px">$0.00</div>
<div class="c n pu" style="left:1895.5px;width:181px">$0.00</div>
<div class="c n pu" style="left:2076.5px;width:188px">$0.00</div>
</div>
<div class="r s b" style="top:290px">
<div class="c i" style="left:0px;width:315.5px">Misc. Equipment</div>
<div class="c" style="left:315.5px;width:199.7px"></div>
<div class="c n" style="left:515.2px;width:91.2px"></div>
<div class="c n" style="left:606.4px;width:74px"></div>
<div class="c n" style="left:680.4px;width:163.7px"></div>
<div class="c n" style="left:844.1px;width:181.2px">$28,200.00</div>
<div class="c n" style="left:1025.3px;width:181.1px">$28.20</div>
<div class="c n" style="left:1206.4px;width:163.3px"></div>
<div class="c n" style="left:1369.7px;width:181.3px">$28,800.00</div>
<div class="c n" style="left:1551px;width:181.4px">$28.80</div>
<div class="c n" style="left:1732.4px;width:163.1px"></div>
<div class="c n" style="left:1895.5px;width:181px">$29,300.00</div>
<div class="c n" style="left:2076.5px;width:188px">$29.30</div>
</div>
<div class="r" style="top:317px">
<div class="c i" style="left:0px;width:315.5px">Smallwares</div>
<div class="c" style="left:315.5px;width:199.7px"></div>
<div class="c n" style="left:515.2px;width:91.2px">1</div>
<div class="c n" style="left:606.4px;width:74px">allow</div>
<div class="c n" style="left:680.4px;width:163.7px">$14,500.00</div>
<div class="c n bl" style="left:844.1px;width:181.2px">$14,500.00</div>
<div class="c n bl" style="left:1025.3px;width:181.1px">$14.50</div>
<div class="c n" style="left:1206.4px;width:163.3px">$14,900.00</div>
<div class="c n og" style="left:1369.7px;width:181.3px">$14,900.00</div>
<div class="c n og" style="left:1551px;width:181.4px">$14.90</div>
<div class="c n" style="left:1732.4px;width:163.1px">$15,300.00</div>
<div class="c n pu" style="left:1895.5px;width:181px">$15,300.00</div>
<div class="c n pu" style="left:2076.5px;width:188px">$15.30</div>
</div>
<div class="r" style="top:344px">
<div class="c i" style="left:0px;width:315.5px">Furniture</div>
<div class="c" style="left:315.5px;width:199.7px"></div>
<div class="c n" style="left:515.2px;width:91.2px">1</div>
<div class="c n" style="left:606.4px;width:74px">allow</div>
<div class="c n" style="left:680.4px;width:163.7px">$0.00</div>
<div class="c n bl" style="left:844.1px;width:181.2px">$0.00</div>
<div class="c n bl" style="left:1025.3px;width:181.1px">$0.00</div>
<div class="c n" style="left:1206.4px;width:163.3px">$0.00</div>
<div class="c n og" style="left:1369.7px;width:181.3px">$0.00</div>
<div class="c n og" style="left:1551px;width:181.4px">$0.00</div>
<div class="c n" style="left:1732.4px;width:163.1px">$0.00</div>
<div class="c n pu" style="left:1895.5px;width:181px">$0.00</div>
<div class="c n pu" style="left:2076.5px;width:188px">$0.00</div>
</div>
<div class="r" style="top:371px">
<div class="c i" style="left:0px;width:315.5px">Office Supplies</div>
<div class="c" style="left:315.5px;width:199.7px"></div>
<div class="c n" style="left:515.2px;width:91.2px">1</div>
<div class="c n" style="left:606.4px;width:74px">allow</div>
<div class="c n" style="left:680.4px;width:163.7px">$500.00</div>
<div class="c n bl" style="left:844.1px;width:181.2px">$500.00</div>
<div class="c n bl" style="left:1025.3px;width:181.1px">$0.50</div>
<div class="c n" style="left:1206.4px;width:163.3px">$500.00</div>
<div class="c n og" style="left:1369.7px;width:181.3px">$500.00</div>
<div class="c n og" style="left:1551px;width:181.4px">$0.50</div>
<div class="c n" style="left:1732.4px;width:163.1px">$500.00</div>
<div class="c n pu" style="left:1895.5px;width:181px">$500.00</div>
<div class="c n pu" style="left:2076.5px;width:188px">$0.50</div>
</div>
<div class="r" style="top:398px">
<div class="c i" style="left:0px;width:315.5px">Desk/Chair</div>
<div class="c" style="left:315.5px;width:199.7px"></div>
<div class="c n" style="left:515.2px;width:91.2px">1</div>
<div class="c n" style="left:606.4px;width:74px">allow</div>
<div class="c n" style="left:680.4px;width:163.7px">$1,400.00</div>
<div class="c n bl" style="left:844.1px;width:181.2px">$1,400.00</div>
<div class="c n bl" style="left:1025.3px;width:181.1px">$1.40</div>
<div class="c n" style="left:1206.4px;width:163.3px">$1,300.00</div>
<div class="c n og" style="left:1369.7px;width:181.3px">$1,300.00</div>
<div class="c n og" style="left:1551px;width:181.4px">$1.30</div>
<div class="c n" style="left:1732.4px;width:163.1px">$1,300.00</div>
<div class="c n pu" style="left:1895.5px;width:181px">$1,300.00</div>
<div class="c n pu" style="left:2076.5px;width:188px">$1.30</div>
</div>
<div class="r" style="top:425px">
<div class="c i" style="left:0px;width:315.5px">Locking Filing Cabinet</div>
<div class="c" style="left:315.5px;width:199.7px"></div>
<div class="c n" style="left:515.2px;width:91.2px">1</div>
<div class="c n" style="left:606.4px;width:74px">allow</div>
<div class="c n" style="left:680.4px;width:163.7px">$200.00</div>
<div class="c n bl" style="left:844.1px;width:181.2px">$200.00</div>
<div class="c n bl" style="left:1025.3px;width:181.1px">$0.20</div>
<div class="c n" style="left:1206.4px;width:163.3px">$200.00</div>
<div class="c n og" style="left:1369.7px;width:181.3px">$200.00</div>
<div class="c n og" style="left:1551px;width:181.4px">$0.20</div>
<div class="c n" style="left:1732.4px;width:163.1px">$200.00</div>
<div class="c n pu" style="left:1895.5px;width:181px">$200.00</div>
<div class="c n pu" style="left:2076.5px;width:188px">$0.20</div>
</div>
<div class="r" style="top:452px">
<div class="c i" style="left:0px;width:315.5px">Computer</div>
<div class="c" style="left:315.5px;width:199.7px"></div>
<div class="c n" style="left:515.2px;width:91.2px">1</div>
<div class="c n" style="left:606.4px;width:74px">allow</div>
<div class="c n" style="left:680.4px;width:163.7px">$1,500.00</div>
<div class="c n bl" style="left:844.1px;width:181.2px">$1,500.00</div>
<div class="c n bl" style="left:1025.3px;width:181.1px">$1.50</div>
<div class="c n" style="left:1206.4px;width:163.3px">$1,500.00</div>
<div class="c n og" style="left:1369.7px;width:181.3px">$1,500.00</div>
<div class="c n og" style="left:1551px;width:181.4px">$1.50</div>
<div class="c n" style="left:1732.4px;width:163.1px">$1,500.00</div>
<div class="c n pu" style="left:1895.5px;width:181px">$1,500.00</div>
<div class="c n pu" style="left:2076.5px;width:188px">$1.50</div>
</div>
<div class="r" style="top:479px">
<div class="c i" style="left:0px;width:315.5px">Soda</div>
<div class="c" style="left:315.5px;width:199.7px"></div>
<div class="c n" style="left:515.2px;width:91.2px">1</div>
<div class="c n" style="left:606.4px;width:74px">allow</div>
<div class="c n" style="left:680.4px;width:163.7px">$7,700.00</div>
<div class="c n bl" style="left:844.1px;width:181.2px">$7,700.00</div>
<div class="c n bl" style="left:1025.3px;width:181.1px">$7.70</div>
<div class="c n" style="left:1206.4px;width:163.3px">$8,000.00</div>
<div class="c n og" style="left:1369.7px;width:181.3px">$8,000.00</div>
<div class="c n og" style="left:1551px;width:181.4px">$8.00</div>
<div class="c n" style="left:1732.4px;width:163.1px">$8,000.00</div>
<div class="c n pu" style="left:1895.5px;width:181px">$8,000.00</div>
<div class="c n pu" style="left:2076.5px;width:188px">$8.00</div>
</div>
<div class="r" style="top:506px">
<div class="c i" style="left:0px;width:315.5px">Audio System</div>
<div class="c" style="left:315.5px;width:199.7px"></div>
<div class="c n" style="left:515.2px;width:91.2px">1</div>
<div class="c n" style="left:606.4px;width:74px">allow</div>
<div class="c n" style="left:680.4px;width:163.7px">$2,400.00</div>
<div class="c n bl" style="left:844.1px;width:181.2px">$2,400.00</div>
<div class="c n bl" style="left:1025.3px;width:181.1px">$2.40</div>
<div class="c n" style="left:1206.4px;width:163.3px">$2,400.00</div>
<div class="c n og" style="left:1369.7px;width:181.3px">$2,400.00</div>
<div class="c n og" style="left:1551px;width:181.4px">$2.40</div>
<div class="c n" style="left:1732.4px;width:163.1px">$2,500.00</div>
<div class="c n pu" style="left:1895.5px;width:181px">$2,500.00</div>
<div class="c n pu" style="left:2076.5px;width:188px">$2.50</div>
</div>
<div class="r" style="top:533px">
<div class="c i" style="left:0px;width:315.5px">Branding and Decore</div>
<div class="c" style="left:315.5px;width:199.7px"></div>
<div class="c n" style="left:515.2px;width:91.2px">1</div>
<div class="c n" style="left:606.4px;width:74px">allow</div>
<div class="c n" style="left:680.4px;width:163.7px"></div>
<div class="c n bl" style="left:844.1px;width:181.2px">$0.00</div>
<div class="c n bl" style="left:1025.3px;width:181.1px">$0.00</div>
<div class="c n" style="left:1206.4px;width:163.3px">$0.00</div>
<div class="c n og" style="left:1369.7px;width:181.3px">$0.00</div>
<div class="c n og" style="left:1551px;width:181.4px">$0.00</div>
<div class="c n" style="left:1732.4px;width:163.1px">$0.00</div>
<div class="c n pu" style="left:1895.5px;width:181px">$0.00</div>
<div class="c n pu" style="left:2076.5px;width:188px">$0.00</div>
</div>
<div class="r s b" style="top:560px">
<div class="c i" style="left:0px;width:315.5px">Technology</div>
<div class="c" style="left:315.5px;width:199.7px"></div>
<div class="c n" style="left:515.2px;width:91.2px"></div>
<div class="c n" style="left:606.4px;width:74px"></div>
<div class="c n" style="left:680.4px;width:163.7px"></div>
<div class="c n" style="left:844.1px;width:181.2px">$29,000.00</div>
<div class="c n" style="left:1025.3px;width:181.1px">$29.00</div>
<div class="c n" style="left:1206.4px;width:163.3px"></div>
<div class="c n" style="left:1369.7px;width:181.3px">$29,300.00</div>
<div class="c n" style="left:1551px;width:181.4px">$29.30</div>
<div class="c n" style="left:1732.4px;width:163.1px"></div>
<div class="c n" style="left:1895.5px;width:181px">$29,500.00</div>
<div class="c n" style="left:2076.5px;width:188px">$29.50</div>
</div>
<div class="r" style="top:587px">
<div class="c i" style="left:0px;width:315.5px">Digital Menu Boards</div>
<div class="c" style="left:315.5px;width:199.7px"></div>
<div class="c n" style="left:515.2px;width:91.2px">1</div>
<div class="c n" style="left:606.4px;width:74px">ea</div>
<div class="c n" style="left:680.4px;width:163.7px">$9,500.00</div>
<div class="c n bl" style="left:844.1px;width:181.2px">$9,500.00</div>
<div class="c n bl" style="left:1025.3px;width:181.1px">$9.50</div>
<div class="c n" style="left:1206.4px;width:163.3px">$9,800.00</div>
<div class="c n og" style="left:1369.7px;width:181.3px">$9,800.00</div>
<div class="c n og" style="left:1551px;width:181.4px">$9.80</div>
<div class="c n" style="left:1732.4px;width:163.1px">$10,100.00</div>
<div class="c n pu" style="left:1895.5px;width:181px">$10,100.00</div>
<div class="c n pu" style="left:2076.5px;width:188px">$10.10</div>
</div>
<div class="r" style="top:614px">
<div class="c i" style="left:0px;width:315.5px">Self Order Kiosks</div>
<div class="c" style="left:315.5px;width:199.7px"></div>
<div class="c n" style="left:515.2px;width:91.2px">1</div>
<div class="c n" style="left:606.4px;width:74px">ea</div>
<div class="c n" style="left:680.4px;width:163.7px">$8,600.00</div>
<div class="c n bl" style="left:844.1px;width:181.2px">$8,600.00</div>
<div class="c n bl" style="left:1025.3px;width:181.1px">$8.60</div>
<div class="c n" style="left:1206.4px;width:163.3px">$8,600.00</div>
<div class="c n og" style="left:1369.7px;width:181.3px">$8,600.00</div>
<div class="c n og" style="left:1551px;width:181.4px">$8.60</div>
<div class="c n" style="left:1732.4px;width:163.1px">$8,600.00</div>
<div class="c n pu" style="left:1895.5px;width:181px">$8,600.00</div>
<div class="c n pu" style="left:2076.5px;width:188px">$8.60</div>
</div>
<div class="r" style="top:641px">
<div class="c i" style="left:0px;width:315.5px">POS System/s</div>
<div class="c" style="left:315.5px;width:199.7px"></div>
<div class="c n" style="left:515.2px;width:91.2px">1</div>
<div class="c n" style="left:606.4px;width:74px">ea</div>
<div class="c n" style="left:680.4px;width:163.7px">$5,900.00</div>
<div class="c n bl" style="left:844.1px;width:181.2px">$5,900.00</div>
<div class="c n bl" style="left:1025.3px;width:181.1px">$5.90</div>
<div class="c n" style="left:1206.4px;width:163.3px">$5,900.00</div>
<div class="c n og" style="left:1369.7px;width:181.3px">$5,900.00</div>
<div class="c n og" style="left:1551px;width:181.4px">$5.90</div>
<div class="c n" style="left:1732.4px;width:163.1px">$5,900.00</div>
<div class="c n pu" style="left:1895.5px;width:181px">$5,900.00</div>
<div class="c n pu" style="left:2076.5px;width:188px">$5.90</div>
</div>
<div class="r" style="top:668px">
<div class="c i" style="left:0px;width:315.5px">Video Survelliance System</div>
<div class="c" style="left:315.5px;width:199.7px"></div>
<div class="c n" style="left:515.2px;width:91.2px">1</div>
<div class="c n" style="left:606.4px;width:74px">allow</div>
<div class="c n" style="left:680.4px;width:163.7px">$2,400.00</div>
<div class="c n bl" style="left:844.1px;width:181.2px">$2,400.00</div>
<div class="c n bl" style="left:1025.3px;width:181.1px">$2.40</div>
<div class="c n" style="left:1206.4px;width:163.3px">$2,500.00</div>
<div class="c n og" style="left:1369.7px;width:181.3px">$2,500.00</div>
<div class="c n og" style="left:1551px;width:181.4px">$2.50</div>
<div class="c n" style="left:1732.4px;width:163.1px">$2,500.00</div>
<div class="c n pu" style="left:1895.5px;width:181px">$2,500.00</div>
<div class="c n pu" style="left:2076.5px;width:188px">$2.50</div>
</div>
<div class="r" style="top:695px">
<div class="c i" style="left:0px;width:315.5px">Security System (Optional)</div>
<div class="c" style="left:315.5px;width:199.7px"></div>
<div class="c n" style="left:515.2px;width:91.2px">1</div>
<div class="c n" style="left:606.4px;width:74px">allow</div>
<div class="c n" style="left:680.4px;width:163.7px">$2,600.00</div>
<div class="c n bl" style="left:844.1px;width:181.2px">$2,600.00</div>
<div class="c n bl" style="left:1025.3px;width:181.1px">$2.60</div>
<div class="c n" style="left:1206.4px;width:163.3px">$2,500.00</div>
<div class="c n og" style="left:1369.7px;width:181.3px">$2,500.00</div>
<div class="c n og" style="left:1551px;width:181.4px">$2.50</div>
<div class="c n" style="left:1732.4px;width:163.1px">$2,400.00</div>
<div class="c n pu" style="left:1895.5px;width:181px">$2,400.00</div>
<div class="c n pu" style="left:2076.5px;width:188px">$2.40</div>
</div>
<div class="r s b" style="top:722px">
<div class="c i" style="left:0px;width:315.5px">Signage, Graphics &amp; Decore</div>
<div class="c" style="left:315.5px;width:199.7px"></div>
<div class="c n" style="left:515.2px;width:91.2px"></div>
<div class="c n" style="left:606.4px;width:74px"></div>
<div class="c n" style="left:680.4px;width:163.7px"></div>
<div class="c n" style="left:844.1px;width:181.2px">$10,900.00</div>
<div class="c n" style="left:1025.3px;width:181.1px">$10.90</div>
<div class="c n" style="left:1206.4px;width:163.3px"></div>
<div class="c n" style="left:1369.7px;width:181.3px">$10,800.00</div>
<div class="c n" style="left:1551px;width:181.4px">$10.80</div>
<div class="c n" style="left:1732.4px;width:163.1px"></div>
<div class="c n" style="left:1895.5px;width:181px">$10,800.00</div>
<div class="c n" style="left:2076.5px;width:188px">$10.80</div>
</div>
<div class="r" style="top:749px">
<div class="c i" style="left:0px;width:315.5px">Branding Elements &amp; Decore Package</div>
<div class="c" style="left:315.5px;width:199.7px"></div>
<div class="c n" style="left:515.2px;width:91.2px">1</div>
<div class="c n" style="left:606.4px;width:74px">allow</div>
<div class="c n" style="left:680.4px;width:163.7px">$4,900.00</div>
<div class="c n bl" style="left:844.1px;width:181.2px">$4,900.00</div>
<div class="c n bl" style="left:1025.3px;width:181.1px">$4.90</div>
<div class="c n" style="left:1206.4px;width:163.3px">$4,900.00</div>
<div class="c n og" style="left:1369.7px;width:181.3px">$4,900.00</div>
<div class="c n og" style="left:1551px;width:181.4px">$4.90</div>
<div class="c n" style="left:1732.4px;width:163.1px">$4,900.00</div>
<div class="c n pu" style="left:1895.5px;width:181px">$4,900.00</div>
<div class="c n pu" style="left:2076.5px;width:188px">$4.90</div>
</div>
<div class="r" style="top:776px">
<div class="c i" style="left:0px;width:315.5px">Artwork</div>
<div class="c" style="left:315.5px;width:199.7px"></div>
<div class="c n" style="left:515.2px;width:91.2px">1</div>
<div class="c n" style="left:606.4px;width:74px">ea</div>
<div class="c n" style="left:680.4px;width:163.7px">$800.00</div>
<div class="c n bl" style="left:844.1px;width:181.2px">$800.00</div>
<div class="c n bl" style="left:1025.3px;width:181.1px">$0.80</div>
<div class="c n" style="left:1206.4px;width:163.3px">$800.00</div>
<div class="c n og" style="left:1369.7px;width:181.3px">$800.00</div>
<div class="c n og" style="left:1551px;width:181.4px">$0.80</div>
<div class="c n" style="left:1732.4px;width:163.1px">$800.00</div>
<div class="c n pu" style="left:1895.5px;width:181px">$800.00</div>
<div class="c n pu" style="left:2076.5px;width:188px">$0.80</div>
</div>
<div class="r" style="top:803px">
<div class="c i" style="left:0px;width:315.5px">Exterior Signage</div>
<div class="c" style="left:315.5px;width:199.7px"></div>
<div class="c n" style="left:515.2px;width:91.2px">1</div>
<div class="c n" style="left:606.4px;width:74px">allow</div>
<div class="c n" style="left:680.4px;width:163.7px">$5,200.00</div>
<div class="c n bl" style="left:844.1px;width:181.2px">$5,200.00</div>
<div class="c n bl" style="left:1025.3px;width:181.1px">$5.20</div>
<div class="c n" style="left:1206.4px;width:163.3px">$5,100.00</div>
<div class="c n og" style="left:1369.7px;width:181.3px">$5,100.00</div>
<div class="c n og" style="left:1551px;width:181.4px">$5.10</div>
<div class="c n" style="left:1732.4px;width:163.1px">$5,100.00</div>
<div class="c n pu" style="left:1895.5px;width:181px">$5,100.00</div>
<div class="c n pu" style="left:2076.5px;width:188px">$5.10</div>
</div>
</div>
</div>
</body></html>
